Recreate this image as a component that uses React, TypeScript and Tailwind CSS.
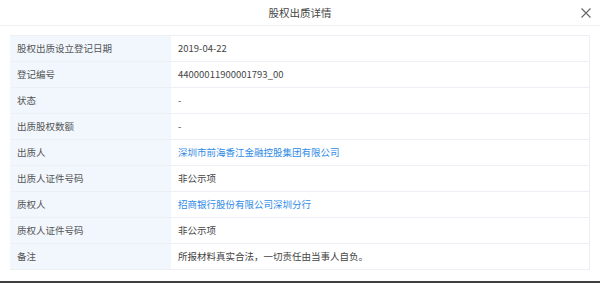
const rows: { label: string; value: string; link?: boolean }[] = [
	{ label: '股权出质设立登记日期', value: '2019-04-22' },
	{ label: '登记编号', value: '44000011900001793_00' },
	{ label: '状态', value: '-' },
	{ label: '出质股权数额', value: '-' },
	{ label: '出质人', value: '深圳市前海香江金融控股集团有限公司', link: true },
	{ label: '出质人证件号码', value: '非公示项' },
	{ label: '质权人', value: '招商银行股份有限公司深圳分行', link: true },
	{ label: '质权人证件号码', value: '非公示项' },
	{ label: '备注', value: '所报材料真实合法，一切责任由当事人自负。' },
];

export default function App() {
	return (
		<div
			className="w-[600px] h-[283px] bg-white flex flex-col overflow-hidden text-[#333]"
			style={{ fontFamily: '"Noto Sans CJK SC", "Liberation Sans", sans-serif' }}
		>
			{/* Header */}
			<div className="h-[26px] shrink-0 flex items-center justify-center relative border-b border-[#eef0f2]">
				<span className="text-[10.5px] text-[#444]">股权出质详情</span>
				<svg className="absolute left-[581px] top-[8px]" width="10" height="10" viewBox="0 0 10 10">
					<path d="M0.5 0.5 L9.5 9.5 M9.5 0.5 L0.5 9.5" stroke="#666" strokeWidth="1.1" fill="none" />
				</svg>
			</div>

			<div className="flex-1 pl-[10px] pr-[10px] pt-[9px]">
				<div className="border-t border-r border-[#eceff3]">
					{rows.map((row) => (
						<div key={row.label} className="flex h-[26px] border-b border-[#eceff3]">
							<div className="w-[161px] shrink-0 bg-[#f1f7fd] pl-[7px] flex items-center text-[9.5px] text-[#555]">
								{row.label}
							</div>
							<div
								className={`flex-1 pl-[7px] flex items-center text-[9.5px] ${row.link ? 'text-[#2e8ae6]' : 'text-[#444]'}`}
							>
								{row.value}
							</div>
						</div>
					))}
				</div>
			</div>

			<div className="h-[2px] shrink-0 bg-[#3f3f3f]" />
		</div>
	);
}
